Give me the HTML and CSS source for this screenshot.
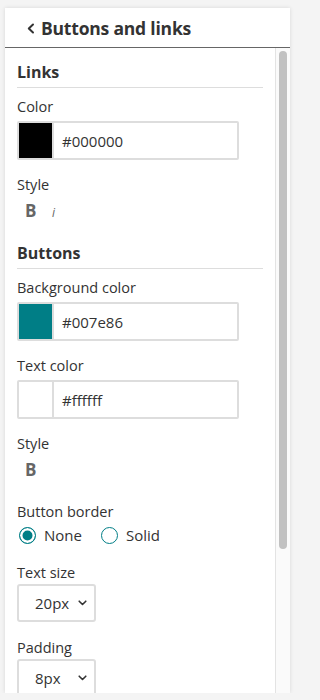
FILE: index.html
```html
<!DOCTYPE html>
<html lang="en">
<head>
<meta charset="utf-8">
<title>Buttons and links</title>
<link rel="stylesheet" href="styles.css">
</head>
<body>
<div class="panel">
  <div class="header">
    <svg class="back" width="8" height="11" viewBox="0 0 8 11"><path d="M6 1.5 L1.8 5.5 L6 9.5" fill="none" stroke="#333" stroke-width="2" stroke-linecap="round" stroke-linejoin="round"/></svg>
    <span class="title">Buttons and links</span>
  </div>
  <div class="scroll">
    <div class="content">
      <div class="section-title">Links</div>
      <div class="field">
        <div class="label">Color</div>
        <div class="color-input">
          <span class="swatch swatch-black"></span>
          <span class="hex">#000000</span>
        </div>
      </div>
      <div class="field">
        <div class="label">Style</div>
        <div class="style-row">
          <span class="style-b">B</span>
          <span class="style-i">i</span>
        </div>
      </div>

      <div class="section-title section-gap">Buttons</div>
      <div class="field">
        <div class="label">Background color</div>
        <div class="color-input">
          <span class="swatch swatch-teal"></span>
          <span class="hex">#007e86</span>
        </div>
      </div>
      <div class="field">
        <div class="label">Text color</div>
        <div class="color-input">
          <span class="swatch swatch-white"></span>
          <span class="hex">#ffffff</span>
        </div>
      </div>
      <div class="field">
        <div class="label">Style</div>
        <div class="style-row">
          <span class="style-b">B</span>
        </div>
      </div>
      <div class="field field-after-style">
        <div class="label">Button border</div>
        <div class="radio-row">
          <label class="radio"><span class="dot checked"></span>None</label>
          <label class="radio"><span class="dot"></span>Solid</label>
        </div>
      </div>
      <div class="field field-after-radio">
        <div class="label">Text size</div>
        <div class="select">
          <span class="select-value">20px</span>
          <svg class="chev" width="9" height="6" viewBox="0 0 9 6"><path d="M1.2 1.2 L4.5 4.5 L7.8 1.2" fill="none" stroke="#333" stroke-width="1.6" stroke-linecap="round" stroke-linejoin="round"/></svg>
        </div>
      </div>
      <div class="field field-after-select">
        <div class="label">Padding</div>
        <div class="select">
          <span class="select-value">8px</span>
          <svg class="chev" width="9" height="6" viewBox="0 0 9 6"><path d="M1.2 1.2 L4.5 4.5 L7.8 1.2" fill="none" stroke="#333" stroke-width="1.6" stroke-linecap="round" stroke-linejoin="round"/></svg>
        </div>
      </div>
    </div>
    <div class="scrollbar">
      <div class="thumb"></div>
    </div>
  </div>
</div>
</body>
</html>
```

FILE: styles.css
```css
html, body {
  margin: 0;
  padding: 0;
}
body {
  background: #f4f4f4;
  font-family: "Open Sans", Lato, sans-serif;
  color: #333;
  padding: 8px 6px 0 5px;
}
.panel {
  width: 285px;
  height: 685px;
  background: #fff;
  box-shadow: 0 0 4px rgba(0, 0, 0, 0.12);
  display: flex;
  flex-direction: column;
}
.header {
  height: 40px;
  box-sizing: border-box;
  border-bottom: 1px solid #666;
  display: flex;
  align-items: center;
  padding-left: 22px;
  flex: none;
}
.back {
  display: block;
  margin-right: 6px;
  margin-top: 1px;
}
.title {
  font-size: 17.5px;
  font-weight: 700;
  line-height: 22px;
  color: #333;
  letter-spacing: -0.2px;
}
.scroll {
  flex: 1;
  display: flex;
  overflow: hidden;
}
.content {
  flex: 1;
  overflow: hidden;
  padding: 14px 12px 0 12px;
}
.scrollbar {
  width: 14px;
  flex: none;
  background: #fafafa;
  border-left: 1px solid #e3e3e3;
}
.thumb {
  width: 8px;
  height: 498px;
  margin: 3px 0 0 3px;
  background: #c1c1c1;
  border-radius: 4px;
}
.section-title {
  font-size: 16px;
  font-weight: 700;
  line-height: 20px;
  padding-bottom: 5px;
  border-bottom: 1px solid #ddd;
}
.section-gap {
  margin-top: 22px;
}
.field {
  margin-top: 10px;
}
.field + .field {
  margin-top: 16px;
}
.field.field-after-style {
  margin-top: 23px;
}
.field.field-after-radio {
  margin-top: 19px;
}
.field.field-after-select {
  margin-top: 17px;
}
.label {
  font-size: 14.5px;
  line-height: 18px;
  color: #333;
}
.color-input {
  margin-top: 5px;
  width: 222px;
  height: 39px;
  box-sizing: border-box;
  border: 2px solid #ddd;
  border-radius: 2px;
  display: flex;
  align-items: center;
}
.swatch {
  width: 33px;
  height: 100%;
  border-right: 2px solid #ddd;
  flex: none;
}
.swatch-black { background: #000; }
.swatch-teal { background: #007e86; }
.swatch-white { background: #fff; }
.hex {
  font-size: 15px;
  padding-left: 8px;
  color: #333;
}
.style-row {
  margin-top: 7px;
  display: flex;
  align-items: baseline;
  padding-left: 8px;
  height: 20px;
  line-height: 20px;
}
.style-b {
  font-size: 17px;
  font-weight: 700;
  color: #666;
  width: 27px;
}
.style-i {
  font-size: 12px;
  font-style: italic;
  color: #666;
}
.radio-row {
  margin-top: 4px;
  display: flex;
  align-items: center;
  height: 20px;
  padding-left: 2px;
}
.radio {
  display: flex;
  align-items: center;
  font-size: 15px;
  color: #333;
  margin-right: 19px;
}
.dot {
  width: 17px;
  height: 17px;
  box-sizing: border-box;
  border: 1.5px solid #007e86;
  border-radius: 50%;
  margin-right: 8px;
  background: #fff;
}
.dot.checked {
  background: #007e86;
  box-shadow: inset 0 0 0 2.5px #fff;
}
.select {
  margin-top: 2px;
  width: 79px;
  height: 38px;
  box-sizing: border-box;
  border: 2px solid #ddd;
  border-radius: 3px;
  display: flex;
  align-items: center;
  justify-content: space-between;
  padding: 0 7px 0 16px;
}
.select-value {
  font-size: 15px;
  color: #333;
}
.chev {
  display: block;
}
```
